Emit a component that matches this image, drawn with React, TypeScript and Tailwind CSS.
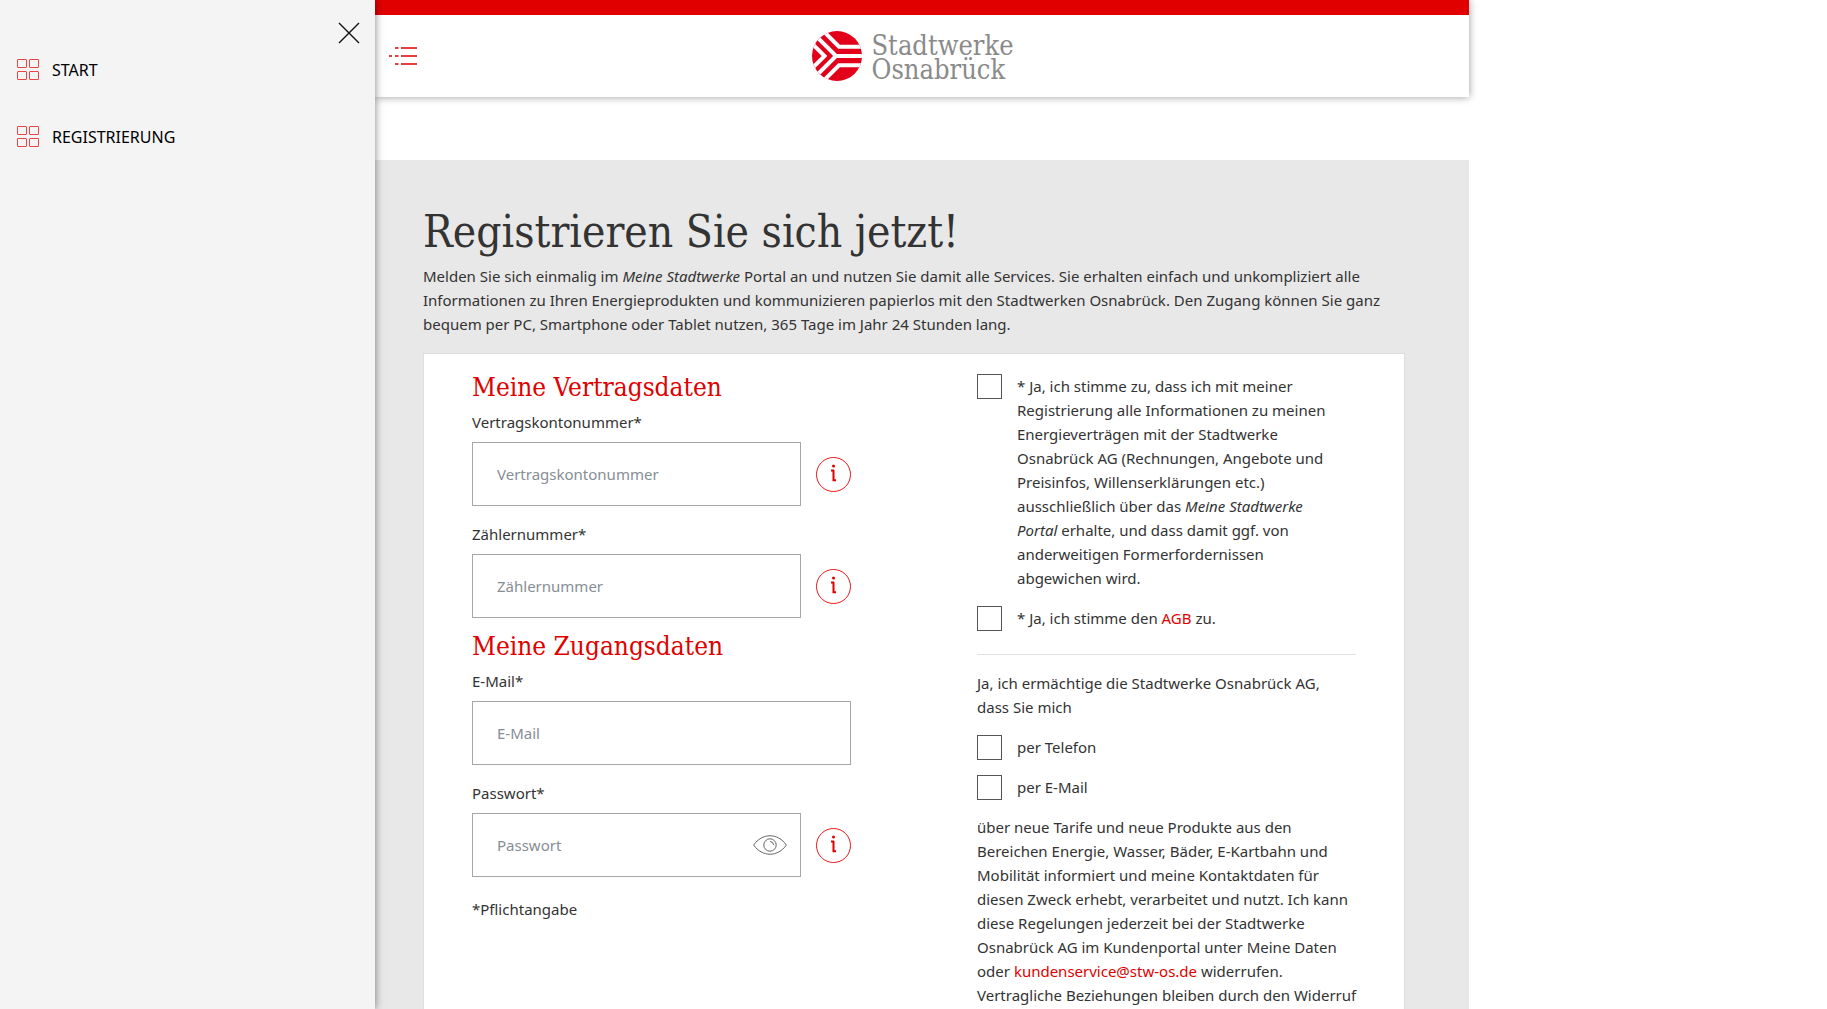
import React from 'react';

const slab = "font-['DejaVu_Serif_Condensed','DejaVu_Serif',serif]";

function GridIcon() {
  return (
    <svg className="h-[22px] w-[22px] shrink-0" viewBox="0 0 22 22" fill="none" stroke="#e64545" aria-hidden="true">
      <rect x="0.5" y="0.5" width="9" height="8" rx="0.5" />
      <rect x="12.5" y="0.5" width="9" height="8" rx="0.5" />
      <rect x="0.5" y="12.5" width="9" height="8" rx="0.5" />
      <rect x="12.5" y="12.5" width="9" height="8" rx="0.5" />
    </svg>
  );
}

function LogoMark() {
  return (
    <svg className="h-[50px] w-[50px] shrink-0" viewBox="0 0 50 50" aria-hidden="true">
      <defs>
        <clipPath id="disc">
          <circle cx="25" cy="25" r="25" />
        </clipPath>
      </defs>
      <g clipPath="url(#disc)">
        <rect width="50" height="50" fill="#e2001a" />
        <g fill="none" stroke="#fff" strokeWidth="4">
          <path d="M7 -4.300L27 15.700H50" />
          <path d="M7 54.300L27 34.300H50" />
          <path d="M-1 0L24 25H50M-1 50L24 25" />
          <path d="M-7.500 5L12.500 25L-7.500 45" />
        </g>
      </g>
    </svg>
  );
}

function InfoButton({ label }: { label: string }) {
  return (
    <button type="button" aria-label={label} className="h-[35px] w-[35px] shrink-0 text-[#e00000]">
      <svg viewBox="0 0 35 35" className="h-full w-full" fill="none" stroke="currentColor" aria-hidden="true">
        <circle cx="17.500" cy="17.500" r="17" strokeWidth="0.900" />
        <circle cx="17.500" cy="9" r="1.500" fill="currentColor" stroke="none" />
        <path d="M15 13.500h3M17.500 13v10.200h2.500" strokeWidth="2" />
      </svg>
    </button>
  );
}

function EyeIcon() {
  return (
    <svg viewBox="0 0 34 20" className="h-5 w-[34px]" fill="none" stroke="#666" aria-hidden="true">
      <path d="M0.700 10C9 -2.300 25 -2.300 33.300 10C25 22.300 9 22.300 0.700 10Z" />
      <circle cx="17" cy="10" r="6.200" />
      <path d="M17 6.500a3.500 3.500 0 0 1 3.500 3.500" />
    </svg>
  );
}

type FieldProps = { id: string; label: string; type?: string; info?: boolean; eye?: boolean };

function Field({ id, label, type = 'text', info, eye }: FieldProps) {
  return (
    <div>
      <label htmlFor={id} className="mb-2 block">{label}*</label>
      <div className="flex items-center gap-[15px]">
        <div className="flex h-16 min-w-0 flex-1 items-center border border-[#a6a6a6] bg-white">
          <input
            id={id}
            type={type}
            placeholder={label}
            className="h-full min-w-0 flex-1 bg-transparent px-6 outline-none placeholder:text-[#868e96]"
          />
          {eye && (
            <button type="button" aria-label="Passwort anzeigen" className="mr-[13px]">
              <EyeIcon />
            </button>
          )}
        </div>
        {info && <InfoButton label={`Info: ${label}`} />}
      </div>
    </div>
  );
}

function Check({ id, children }: { id: string; children: React.ReactNode }) {
  return (
    <div className="flex items-start gap-[15px]">
      <input id={id} type="checkbox" className="h-[25px] w-[25px] shrink-0 appearance-none border border-[#555] bg-white checked:bg-[#e00000]" />
      <label htmlFor={id}>{children}</label>
    </div>
  );
}

function MenuItem({ children }: { children: React.ReactNode }) {
  return (
    <li>
      <a href="#" className="flex items-center gap-[13px] text-base leading-6 text-black">
        <GridIcon />
        {children}
      </a>
    </li>
  );
}

export default function App() {
  return (
    <div className="flex h-screen overflow-hidden bg-white font-['Noto_Sans',sans-serif] text-[15px] leading-6 text-[#333]">
      <aside className="z-10 w-[375px] shrink-0 bg-[#f4f4f4] px-[15px] pt-[22px] shadow-[0_0_8px_rgba(0,0,0,0.5)]">
        <div className="flex justify-end">
          <button type="button" aria-label="Menü schließen">
            <svg className="h-[22px] w-[22px]" viewBox="0 0 22 22" stroke="#111" strokeWidth="1.400" aria-hidden="true">
              <path d="M1 1L21 21M21 1L1 21" />
            </svg>
          </button>
        </div>
        <nav className="mt-3.5 pl-0.5">
          <ul className="flex flex-col gap-[43px]">
            <MenuItem>START</MenuItem>
            <MenuItem>REGISTRIERUNG</MenuItem>
          </ul>
        </nav>
      </aside>

      <div className="flex max-w-[1094px] flex-1 flex-col">
        <header className="flex h-[97px] shrink-0 items-center border-t-[15px] border-[#e00000] bg-white px-3.5 shadow-[0_0_8px_rgba(0,0,0,0.4)]">
          <button type="button" aria-label="Menü" className="w-[30px]">
            <svg className="h-5 w-[30px]" viewBox="0 0 30 20" stroke="#e00000" strokeWidth="1.600" aria-hidden="true">
              <path d="M6 2h3.500M12 2h16M0 10h3M6 10h3.500M12 10h16M6 18h3.500M12 18h16" />
            </svg>
          </button>
          <a href="#" aria-label="Stadtwerke Osnabrück" className="mx-auto flex items-center gap-[9px] pr-12">
            <LogoMark />
            <span className={`${slab} pt-1 text-[27px] leading-6 text-[#8a8a8a]`}>
              Stadtwerke
              <br />
              Osnabrück
            </span>
          </a>
        </header>

        <main className="mt-[63px] flex flex-1 flex-col bg-[#e8e8e8] pt-12 pr-16 pl-12">
          <h1 className={`${slab} mb-2 text-[44px] leading-[48px]`}>Registrieren Sie sich jetzt!</h1>
          <p>
            Melden Sie sich einmalig im <em>Meine Stadtwerke</em> Portal an und nutzen Sie damit alle Services. Sie
            erhalten einfach und unkompliziert alle Informationen zu Ihren Energieprodukten und kommunizieren papierlos
            mit den Stadtwerken Osnabrück. Den Zugang können Sie ganz bequem per PC, Smartphone oder Tablet nutzen, 365
            Tage im Jahr 24 Stunden lang.
          </p>

          <form className="mt-[17px] grid flex-1 grid-cols-2 gap-[126px] border border-[#dedede] bg-white px-12 pb-12">
            <div className="pt-[17px]">
              <h2 className={`${slab} mb-[7px] text-[26px] leading-8 text-[#e00000]`}>Meine Vertragsdaten</h2>
              <div className="flex flex-col gap-4">
                <Field id="vertrag" label="Vertragskontonummer" info />
                <Field id="zaehler" label="Zählernummer" info />
              </div>
              <h2 className={`${slab} mt-3 mb-[7px] text-[26px] leading-8 text-[#e00000]`}>Meine Zugangsdaten</h2>
              <div className="flex flex-col gap-4">
                <Field id="email" label="E-Mail" type="email" />
                <Field id="passwort" label="Passwort" type="password" info eye />
              </div>
              <p className="mt-5">*Pflichtangabe</p>
            </div>

            <div className="pt-5">
              <div className="flex flex-col gap-4">
                <Check id="zustimmung">
                  * Ja, ich stimme zu, dass ich mit meiner Registrierung alle Informationen zu meinen Energieverträgen
                  mit der Stadtwerke Osnabrück AG (Rechnungen, Angebote und Preisinfos, Willenserklärungen etc.)
                  ausschließlich über das{' '}
                  <em>
                    Meine Stadtwerke
                    <br />
                    Portal
                  </em>{' '}
                  erhalte, und dass damit ggf. von
                  <br />
                  anderweitigen Formerfordernissen
                  <br />
                  abgewichen wird.
                </Check>
                <Check id="agb">
                  * Ja, ich stimme den <a href="#" className="text-[#e00000]">AGB</a> zu.
                </Check>
              </div>
              <hr className="mt-[23px] mb-4 border-[#e0e0e0]" />
              <p className="mb-4">
                Ja, ich ermächtige die Stadtwerke Osnabrück AG,
                <br />
                dass Sie mich
              </p>
              <div className="flex flex-col gap-[15px]">
                <Check id="telefon">per Telefon</Check>
                <Check id="permail">per E-Mail</Check>
              </div>
              <p className="-mr-4 mt-[15px]">
                über neue Tarife und neue Produkte aus den
                <br />
                Bereichen Energie, Wasser, Bäder, E-Kartbahn und Mobilität informiert und meine Kontaktdaten für
                <br />
                diesen Zweck erhebt, verarbeitet und nutzt. Ich kann diese Regelungen jederzeit bei der Stadtwerke
                Osnabrück AG im Kundenportal unter Meine Daten oder{' '}
                <a href="mailto:kundenservice@stw-os.de" className="text-[#e00000]">kundenservice@stw-os.de</a>{' '}
                widerrufen.
                <br />
                Vertragliche Beziehungen bleiben durch den Widerruf
              </p>
            </div>
          </form>
        </main>
      </div>
    </div>
  );
}
